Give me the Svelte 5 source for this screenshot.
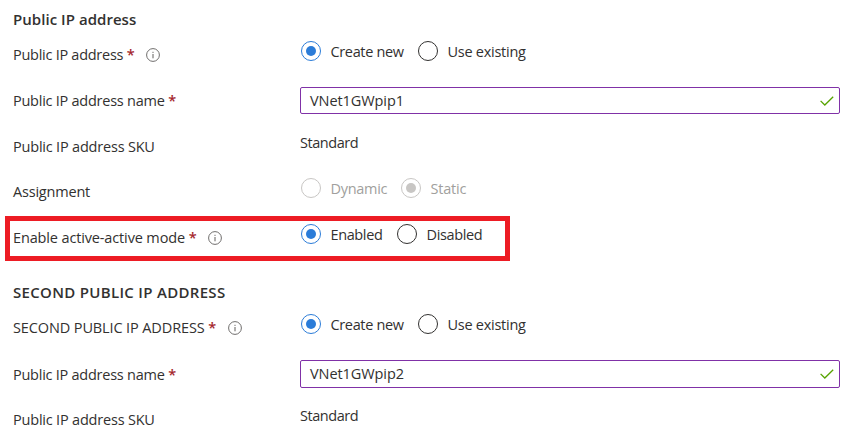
<script>
  const createOptions = [
    { text: 'Create new', width: 117, on: true, track: -0.35 },
    { text: 'Use existing', width: 120, track: -0.26 }
  ];
  const rows = [
    { heading: 'Public IP address', height: 31, shift: 8, track: 0.04 },
    { label: 'Public IP address', track: -0.27, required: true, info: true, height: 40, shift: 8, options: createOptions },
    { label: 'Public IP address name', track: -0.25, required: true, height: 59, shift: 0, input: 'VNet1GWpip1', box: 27 },
    { label: 'Public IP address SKU', track: -0.2, height: 26, shift: 8, value: 'Standard' },
    {
      label: 'Assignment', track: -0.2, height: 63, shift: 9, disabled: true,
      options: [
        { text: 'Dynamic', width: 100, track: -0.3 },
        { text: 'Static', width: 100, on: true, track: -0.2 }
      ]
    },
    {
      label: 'Enable active-active mode', track: -0.14, required: true, info: true, height: 30, shift: 8, marked: true,
      options: [
        { text: 'Enabled', width: 96, on: true, track: -0.38 },
        { text: 'Disabled', width: 100, track: -0.35 }
      ]
    },
    { heading: 'SECOND PUBLIC IP ADDRESS', height: 55, shift: 32, track: 0.31 },
    { label: 'SECOND PUBLIC IP ADDRESS', track: -0.12, required: true, info: true, height: 40, shift: 8, options: createOptions },
    { label: 'Public IP address name', track: -0.25, required: true, height: 60, shift: 2, input: 'VNet1GWpip2', box: 28 },
    { label: 'Public IP address SKU', track: -0.2, height: 24, shift: 8, value: 'Standard' }
  ];
</script>

<main>
  {#each rows as row}
    {#if row.heading}
      <h2 style:height="{row.height}px" style:padding-top="{row.shift}px" style:letter-spacing="{row.track}px">{row.heading}</h2>
    {:else}
      <div class="row" class:marked={row.marked} style:height="{row.height}px">
        <div class="label" style:padding-top="{row.shift}px">
          <span style:letter-spacing="{row.track}px">{row.label}</span>
          {#if row.required}<span class="star">*</span>{/if}
          {#if row.info}
            <svg class="info" width="14" height="14" viewBox="0 0 14 14">
              <circle cx="7" cy="7" r="6.4" fill="none" stroke="#605e5c" stroke-width=".9" />
              <path d="M7 6v4.3M7 3.8v1.1" stroke="#605e5c" stroke-width="1" />
            </svg>
          {/if}
        </div>
        {#if row.options}
          <div class="options" class:disabled={row.disabled}>
            {#each row.options as option}
              <div class="option" class:on={option.on} style:width="{option.width}px">
                <i class="radio"></i><span class="text" style:letter-spacing="{option.track}px">{option.text}</span>
              </div>
            {/each}
          </div>
        {:else if row.input}
          <div class="input" style:height="{row.box}px">
            <span>{row.input}</span>
            <svg width="14" height="10" viewBox="0 0 14 10">
              <path d="M.6 4.9 4.8 9 13.2.7" fill="none" stroke="#57a300" stroke-width="1.3" />
            </svg>
          </div>
        {:else}
          <div class="value">{row.value}</div>
        {/if}
      </div>
    {/if}
  {/each}
</main>

<style>
  :global(body) { margin: 0; background: #fff; }
  main {
    width: 866px;
    height: 448px;
    overflow: hidden;
    font: 14.5px/20px 'Open Sans', 'Noto Sans', sans-serif;
    letter-spacing: -0.35px;
    color: #323130;
    white-space: nowrap;
  }
  h2 {
    box-sizing: border-box;
    margin: 0;
    padding-left: 13px;
    font-size: 15px;
    line-height: 22px;
    font-weight: 600;
  }
  .row { display: flex; align-items: center; position: relative; }
  .label {
    flex: none;
    width: 300px;
    padding-left: 13px;
    box-sizing: border-box;
    display: flex;
    align-items: center;
  }
  .star { margin-left: 3.7px; color: #a4262c; font-weight: 600; }
  .info { margin-left: 12px; }
  .options { display: flex; padding-left: 1px; }
  .option { display: flex; align-items: center; gap: 9.5px; height: 20px; }
  .text { padding-top: 2px; }
  .radio {
    flex: none;
    width: 20px;
    height: 20px;
    box-sizing: border-box;
    border: 1px solid #323130;
    border-radius: 50%;
    display: grid;
    place-items: center;
  }
  .on .radio { border-color: #2b7cd8; }
  .on .radio::after {
    content: '';
    width: 10px;
    height: 10px;
    border-radius: 50%;
    background: #2b7cd8;
  }
  .disabled { color: #a19f9d; }
  .disabled .radio { border-color: #c8c6c4; }
  .disabled .radio::after { background: #c8c6c4; }
  .value { letter-spacing: -0.45px; }
  .input {
    width: 540px;
    box-sizing: border-box;
    border: 1px solid #8031a7;
    border-radius: 2px;
    padding: 0 5.5px 0 9px;
    letter-spacing: -0.08px;
    display: flex;
    align-items: center;
    justify-content: space-between;
  }
  .marked::after {
    content: '';
    position: absolute;
    left: 5px;
    top: -3px;
    width: 505px;
    height: 45px;
    box-sizing: border-box;
    border: 5px solid #ed1c24;
  }
</style>
